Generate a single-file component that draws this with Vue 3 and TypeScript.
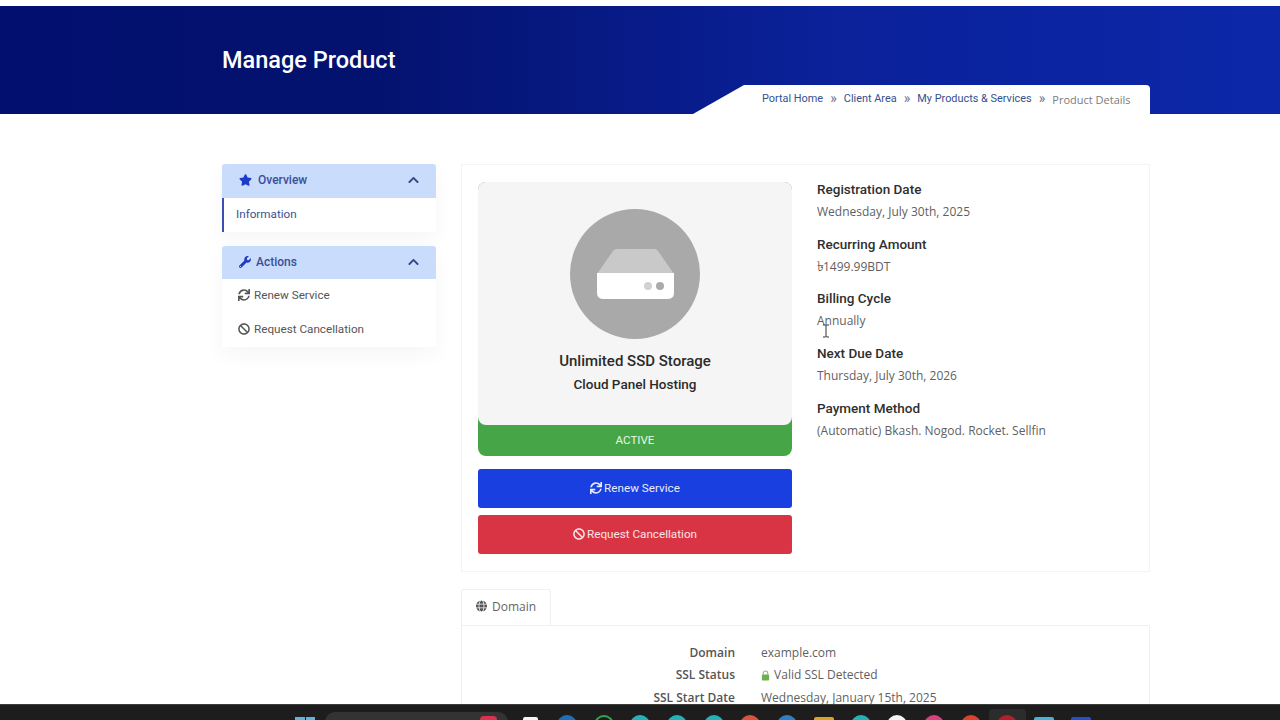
<template>
  <div class="screen">
    <div class="page">
      <header class="banner">
        <div class="banner-inner">
          <h1 class="page-title">Manage Product</h1>
          <nav class="crumbs">
            <template v-for="(crumb, i) in crumbs" :key="crumb">
              <span v-if="i > 0" class="crumb-sep">»</span>
              <span :class="['crumb', { current: i === crumbs.length - 1 }]">{{ crumb }}</span>
            </template>
          </nav>
        </div>
      </header>

      <div class="layout">
        <aside class="sidebar">
          <section class="side-panel">
            <div class="side-head">
              <span class="side-title">
                <svg class="icon star" viewBox="0 0 576 512"><path :d="icons.star" /></svg>
                Overview
              </span>
              <svg class="chev" viewBox="0 0 448 512"><path :d="icons.chevron" /></svg>
            </div>
            <div class="side-item active">Information</div>
          </section>
          <section class="side-panel">
            <div class="side-head">
              <span class="side-title tight">
                <svg class="icon wrench" viewBox="0 0 512 512"><path :d="icons.wrench" /></svg>
                Actions
              </span>
              <svg class="chev" viewBox="0 0 448 512"><path :d="icons.chevron" /></svg>
            </div>
            <div class="side-item with-icon">
              <svg class="icon" viewBox="0 0 512 512"><path :d="icons.sync" /></svg>
              Renew Service
            </div>
            <div class="side-item with-icon">
              <svg class="icon" viewBox="0 0 512 512"><path :d="icons.ban" /></svg>
              Request Cancellation
            </div>
          </section>
        </aside>

        <main class="content">
          <section class="product-card">
            <div class="product-left">
              <div class="status-wrap">
                <div class="product-box">
                  <svg class="drive" viewBox="0 0 130 130">
                    <circle cx="65" cy="65" r="65" fill="#a9a9a9" />
                    <path d="M27 65 L43 42 Q44 40 47 40 H84 Q87 40 88 42 L104 65 Z" fill="#c9c9c9" />
                    <path d="M27 64 H104 V84 Q104 90 97 90 H34 Q27 90 27 84 Z" fill="#ffffff" />
                    <circle cx="78" cy="77" r="4" fill="#d2d2d2" />
                    <circle cx="90" cy="77" r="4" fill="#ababab" />
                  </svg>
                  <div class="product-name">Unlimited SSD Storage</div>
                  <div class="product-group">Cloud Panel Hosting</div>
                </div>
                <div class="status">ACTIVE</div>
              </div>
              <button class="btn btn-renew">
                <svg class="icon" viewBox="0 0 512 512"><path :d="icons.sync" /></svg>
                Renew Service
              </button>
              <button class="btn btn-cancel">
                <svg class="icon" viewBox="0 0 512 512"><path :d="icons.ban" /></svg>
                Request Cancellation
              </button>
            </div>
            <div class="product-info">
              <div v-for="row in details" :key="row.label" class="info-block">
                <div class="info-label">{{ row.label }}</div>
                <div class="info-value"><span v-if="row.currency" class="taka">{{ row.currency }}</span>{{ row.value }}</div>
              </div>
            </div>
            <!-- text cursor caught in the screen recording -->
            <svg class="cursor" viewBox="0 0 8 14">
              <path d="M1 1h2.5l.5.6.5-.6H7M4 1.5v11M1 13h2.5l.5-.6.5.6H7" fill="none" stroke="#333" stroke-width="1" />
            </svg>
          </section>

          <div class="tabs">
            <div class="tab">
              <svg class="icon globe" viewBox="0 0 496 512"><path :d="icons.globe" /></svg>
              Domain
            </div>
          </div>
          <section class="tab-pane">
            <div class="domain-grid">
              <template v-for="row in domainRows" :key="row.label">
                <div class="domain-label">{{ row.label }}</div>
                <div class="domain-value">
                  <svg v-if="row.secure" class="lock" viewBox="0 0 10 12">
                    <path d="M2.5 5V3.5a2.5 2.5 0 0 1 5 0V5" fill="none" stroke="#a5a5a5" stroke-width="1.2" />
                    <rect x="1" y="5" width="8" height="6.5" rx="1" fill="#6fb04a" />
                  </svg>
                  {{ row.value }}
                </div>
              </template>
            </div>
          </section>
        </main>
      </div>
    </div>

    <footer class="taskbar">
      <div class="win-logo"><i /><i /></div>
      <div class="task-search"><span class="search-mark" /></div>
      <div class="task-icons">
        <span
          v-for="(app, i) in taskApps"
          :key="i"
          :class="['task-slot', { running: app.running }]"
        >
          <span :class="['task-app', app.shape]" :style="{ background: app.color, borderColor: app.color }" />
        </span>
      </div>
    </footer>
  </div>
</template>

<script setup lang="ts">
interface Row {
  label: string
  value: string
  currency?: string
  secure?: boolean
}

interface TaskApp {
  color: string
  shape?: string
  running?: boolean
}

const icons = {
  star: 'M259.3 17.8L194 150.2 47.9 171.5c-26.2 3.8-36.7 36.1-17.7 54.6l105.7 103-25 145.5c-4.5 26.3 23.2 46 46.4 33.7L288 439.6l130.7 68.7c23.2 12.2 50.9-7.4 46.4-33.7l-25-145.5 105.7-103c19-18.5 8.5-50.8-17.7-54.6L382 150.2 316.7 17.8c-11.7-23.6-45.6-23.9-57.4 0z',
  chevron: 'M240.971 130.524l194.343 194.343c9.373 9.373 9.373 24.569 0 33.941l-22.667 22.667c-9.357 9.357-24.522 9.375-33.901.04L224 227.495 69.255 381.516c-9.379 9.335-24.544 9.317-33.901-.04l-22.667-22.667c-9.373-9.373-9.373-24.569 0-33.941L207.03 130.525c9.372-9.373 24.568-9.373 33.941-.001z',
  wrench: 'M507.73 109.1c-2.24-9.03-13.54-12.09-20.12-5.51l-74.36 74.36-67.88-11.31-11.31-67.88 74.36-74.36c6.62-6.62 3.43-17.9-5.66-20.16-47.38-11.74-99.55.91-136.58 37.93-39.64 39.64-50.55 97.1-34.05 147.2L18.74 402.76c-24.99 24.99-24.99 65.51 0 90.5 24.99 24.99 65.51 24.99 90.5 0l213.21-213.21c50.12 16.71 107.47 5.68 147.37-34.22 37.07-37.07 49.7-89.32 37.91-136.73zM64 472c-13.25 0-24-10.75-24-24 0-13.26 10.75-24 24-24s24 10.74 24 24c0 13.25-10.75 24-24 24z',
  sync: 'M440.65 12.57l4 82.77A247.16 247.16 0 0 0 255.83 8C134.73 8 33.91 94.92 12.29 209.82A12 12 0 0 0 24.09 224h49.05a12 12 0 0 0 11.67-9.26 175.91 175.91 0 0 1 317-56.94l-101.46-4.86a12 12 0 0 0-12.57 12v47.41a12 12 0 0 0 12 12H500a12 12 0 0 0 12-12V12a12 12 0 0 0-12-12h-47.37a12 12 0 0 0-11.98 12.57zM255.83 432a175.61 175.61 0 0 1-146-77.8l101.8 4.87a12 12 0 0 0 12.57-12v-47.4a12 12 0 0 0-12-12H12a12 12 0 0 0-12 12V500a12 12 0 0 0 12 12h47.35a12 12 0 0 0 12-12.6l-4.15-82.57A247.17 247.17 0 0 0 255.83 504c121.11 0 221.93-86.92 243.55-201.82a12 12 0 0 0-11.8-14.18h-49.05a12 12 0 0 0-11.67 9.26A175.86 175.86 0 0 1 255.83 432z',
  ban: 'M256 8C119.034 8 8 119.033 8 256s111.034 248 248 248 248-111.034 248-248S392.967 8 256 8zm130.108 117.892c65.448 65.448 70 165.481 20.677 235.637L150.47 105.216c70.204-49.356 170.226-44.735 235.638 20.676zM125.892 386.108c-65.448-65.448-70-165.481-20.677-235.637L361.53 406.784c-70.203 49.356-170.226 44.736-235.638-20.676z',
  globe: 'M336.5 160C322 70.7 287.8 8 248 8s-74 62.7-88.5 152h177zM152 256c0 22.2 1.2 43.5 3.3 64h185.3c2.1-20.5 3.3-41.8 3.3-64s-1.2-43.5-3.3-64H155.3c-2.1 20.5-3.3 41.8-3.3 64zm324.7-96c-28.6-67.9-86.5-120.4-158-141.6 24.4 33.8 41.2 84.7 50 141.6h108zM177.2 18.4C105.8 39.6 47.8 92.1 19.3 160h108c8.7-56.9 25.5-107.8 49.9-141.6zM487.4 192H372.7c2.1 21 3.3 42.5 3.3 64s-1.2 43-3.3 64h114.6c5.5-20.5 8.6-41.8 8.6-64s-3.1-43.5-8.5-64zM120 256c0-21.5 1.2-43 3.3-64H8.6C3.2 212.5 0 233.8 0 256s3.2 43.5 8.6 64h114.6c-2-21-3.2-42.5-3.2-64zm39.5 96c14.5 89.3 48.7 152 88.5 152s74-62.7 88.5-152h-177zm159.3 141.6c71.4-21.2 129.4-73.7 158-141.6h-108c-8.8 56.9-25.6 107.8-50 141.6zM19.3 352c28.6 67.9 86.5 120.4 158 141.6-24.4-33.8-41.2-84.7-50-141.6h-108z'
}

const crumbs = ['Portal Home', 'Client Area', 'My Products & Services', 'Product Details']

const details: Row[] = [
  { label: 'Registration Date', value: 'Wednesday, July 30th, 2025' },
  { label: 'Recurring Amount', value: '1499.99BDT', currency: '৳' },
  { label: 'Billing Cycle', value: 'Annually' },
  { label: 'Next Due Date', value: 'Thursday, July 30th, 2026' },
  { label: 'Payment Method', value: '(Automatic) Bkash. Nogod. Rocket. Sellfin' }
]

const domainRows: Row[] = [
  { label: 'Domain', value: 'example.com' },
  { label: 'SSL Status', value: 'Valid SSL Detected', secure: true },
  { label: 'SSL Start Date', value: 'Wednesday, January 15th, 2025' }
]

const taskApps: TaskApp[] = [
  { color: '#f4f4f4', shape: 'square small' },
  { color: '#1f6fb5' },
  { color: '#2fa84f', shape: 'ring' },
  { color: '#22b3b8' },
  { color: '#22b3b8' },
  { color: '#22b3b8' },
  { color: '#d9533c' },
  { color: '#2f7fc4' },
  { color: '#d9a520', shape: 'square' },
  { color: '#22b3b8' },
  { color: '#f4f4f4' },
  { color: '#d8407f' },
  { color: '#d9432f' },
  { color: '#b3202c', running: true },
  { color: '#3fb6d8', shape: 'square' },
  { color: '#2450d0', shape: 'square' }
]
</script>

<style scoped>
.screen {
  width: 1280px;
  height: 720px;
  display: flex;
  flex-direction: column;
  overflow: hidden;
  background: #fff;
  font-family: "Open Sans", sans-serif;
  color: #444;
}

.page {
  flex: 1;
  min-height: 0;
  overflow: hidden;
  padding-top: 6px;
}

.banner {
  height: 108px;
  background: linear-gradient(90deg, #020f6e 0%, #04126f 30%, #0a219a 65%, #0c27a8 100%);
}

.banner-inner {
  width: 928px;
  height: 100%;
  margin-left: 222px;
  display: flex;
  justify-content: space-between;
}

.page-title {
  margin: 0;
  align-self: center;
  font-family: Roboto, sans-serif;
  font-size: 23.5px;
  font-weight: 500;
  color: #fff;
}

.crumbs {
  align-self: flex-end;
  width: 457px;
  height: 29px;
  box-sizing: border-box;
  padding: 0 0 2px 69px;
  display: flex;
  align-items: center;
  background: #fff;
  border-top-right-radius: 4px;
  clip-path: polygon(51px 0, 100% 0, 100% 100%, 0 100%);
  font-family: Roboto, sans-serif;
  font-size: 10.9px;
}

.crumb {
  color: #35508f;
  white-space: nowrap;
}

.crumb.current {
  color: #7b7b7b;
  font-family: "Open Sans", sans-serif;
  font-size: 11px;
  margin-top: 1px;
}

.crumb-sep {
  width: 20.7px;
  text-align: center;
  color: #6b7590;
  font-size: 14px;
  line-height: 1;
  margin-top: -2px;
}

.layout {
  width: 928px;
  margin: 50px 0 0 222px;
  display: flex;
  gap: 25px;
  align-items: flex-start;
}

.sidebar {
  width: 214px;
  flex-shrink: 0;
  display: flex;
  flex-direction: column;
  gap: 14px;
}

.side-panel {
  background: #fff;
  box-shadow: 0 8px 20px rgba(0, 0, 0, 0.04);
}

.side-head {
  height: 33.5px;
  box-sizing: border-box;
  padding: 0 17px 1px 17px;
  display: flex;
  align-items: center;
  justify-content: space-between;
  background: #c9dcfb;
  border-radius: 3px 3px 0 0;
}

.side-title {
  display: flex;
  align-items: center;
  gap: 6px;
  font-family: Roboto, sans-serif;
  font-size: 12px;
  font-weight: 500;
  color: #3a4f97;
}

.side-title.tight {
  gap: 5px;
}

.icon {
  width: 12px;
  height: 12px;
  fill: currentColor;
  flex-shrink: 0;
}

.star {
  width: 13px;
  height: 12px;
  color: #1c3cc8;
}

.wrench {
  color: #1c3cc8;
}

.chev {
  width: 11px;
  height: 12px;
  fill: #36468a;
}

.side-item {
  height: 34px;
  box-sizing: border-box;
  padding-bottom: 2px;
  display: flex;
  align-items: center;
  font-family: Roboto, sans-serif;
  font-size: 11.7px;
  color: #555;
}

.side-item.active {
  padding-left: 12px;
  border-left: 2px solid #3a4fb0;
  color: #3c5290;
}

.side-item.with-icon {
  padding-left: 16px;
  gap: 4px;
}

.content {
  flex: 1;
  min-width: 0;
}

.product-card {
  position: relative;
  display: flex;
  gap: 25px;
  height: 408px;
  box-sizing: border-box;
  padding: 17px 16px;
  border: 1px solid #f4f4f4;
}

.product-left {
  width: 314px;
  flex-shrink: 0;
  display: flex;
  flex-direction: column;
}

.status-wrap {
  background: #46a546;
  border-radius: 8px;
  margin-bottom: 13px;
}

.product-box {
  height: 243px;
  box-sizing: border-box;
  padding-top: 27px;
  display: flex;
  flex-direction: column;
  align-items: center;
  background: #f5f5f5;
  border-radius: 8px;
}

.drive {
  width: 130px;
  height: 130px;
}

.product-name {
  margin-top: 13px;
  font-family: Roboto, sans-serif;
  font-size: 15px;
  font-weight: 500;
  line-height: 18px;
  color: #2b2b2b;
}

.product-group {
  margin-top: 5px;
  font-family: Roboto, sans-serif;
  font-size: 13.5px;
  font-weight: 500;
  line-height: 18px;
  color: #2b2b2b;
}

.status {
  height: 31px;
  padding-bottom: 2px;
  box-sizing: border-box;
  display: flex;
  align-items: center;
  justify-content: center;
  font-family: Roboto, sans-serif;
  font-size: 11.6px;
  color: #e9f7e4;
}

.btn {
  height: 39px;
  border: 0;
  border-radius: 3px;
  display: flex;
  align-items: center;
  justify-content: center;
  gap: 2px;
  font-family: Roboto, sans-serif;
  font-size: 11.7px;
  color: #e8ecfb;
  padding: 0 0 1px;
}

.btn-renew {
  background: #1a3fe0;
  margin-bottom: 7px;
}

.btn-cancel {
  background: #d93444;
  color: #fbe4e6;
}

.product-info {
  flex: 1;
  margin-top: -1px;
}

.info-block {
  height: 54.7px;
}

.info-label {
  font-family: Roboto, sans-serif;
  font-size: 13.5px;
  font-weight: 500;
  line-height: 17px;
  color: #2f2f2f;
}

.info-value {
  margin-top: 5px;
  height: 17px;
  font-size: 12px;
  line-height: 17px;
  color: #5f5f5f;
  font-family: "Open Sans", sans-serif;
}

.taka {
  font-family: "Noto Sans", "DejaVu Sans", sans-serif;
  font-size: 14px;
  line-height: 0;
  margin-right: -1px;
}

.cursor {
  position: absolute;
  left: 360px;
  top: 159px;
  width: 8px;
  height: 14px;
}

.tabs {
  display: flex;
  margin-top: 17px;
}

.tab {
  width: 90px;
  height: 37px;
  box-sizing: border-box;
  padding-bottom: 4px;
  display: flex;
  align-items: center;
  justify-content: center;
  gap: 5px;
  border: 1px solid #f0f0f0;
  border-bottom: 0;
  border-radius: 3px 3px 0 0;
  font-size: 12px;
  color: #666;
}

.globe {
  width: 11px;
  height: 12px;
  color: #555;
}

.tab-pane {
  border: 1px solid #f0f0f0;
  padding-top: 18px;
  height: 200px;
  margin-top: -1px;
}

.domain-grid {
  display: grid;
  grid-template-columns: 273px 1fr;
  column-gap: 26px;
  row-gap: 5.3px;
  font-size: 12px;
  line-height: 17px;
}

.domain-label {
  text-align: right;
  font-weight: 600;
  color: #555;
}

.domain-value {
  color: #5f5f5f;
}

.lock {
  width: 9px;
  height: 11px;
  margin-right: 1px;
  vertical-align: -2px;
}

.taskbar {
  height: 16px;
  flex-shrink: 0;
  display: flex;
  background: #1d1d1d;
  border-top: 1px solid #3c3c3c;
  box-sizing: border-box;
  overflow: hidden;
}

.win-logo {
  margin: 12px 0 0 295px;
  width: 20px;
  display: flex;
  gap: 1px;
}

.win-logo i {
  flex: 1;
  height: 10px;
  background: #5fb4dd;
}

.task-search {
  width: 183px;
  height: 20px;
  margin: 7px 0 0 10px;
  background: #333;
  border-radius: 10px;
  display: flex;
  justify-content: flex-end;
  padding-right: 11px;
  box-sizing: border-box;
}

.search-mark {
  width: 17px;
  height: 16px;
  margin-top: 4px;
  background: #d8324f;
  border-radius: 4px;
}

.task-icons {
  display: flex;
  margin-left: 4px;
}

.task-slot {
  width: 36.7px;
  display: flex;
  justify-content: center;
}

.task-slot.running {
  background: #2c2c2c;
  border-radius: 4px 4px 0 0;
  margin-top: 4px;
}

.task-app {
  width: 20px;
  height: 20px;
  margin-top: 10px;
  border-radius: 50%;
  border: 2px solid transparent;
  box-sizing: border-box;
}

.task-slot.running .task-app {
  margin-top: 6px;
}

.task-app.square {
  border-radius: 2px;
  margin-top: 12px;
}

.task-app.small {
  width: 15px;
}

.task-app.ring {
  background: transparent !important;
}
</style>

<style>
html,
body {
  margin: 0;
  overflow: hidden;
}
</style>
